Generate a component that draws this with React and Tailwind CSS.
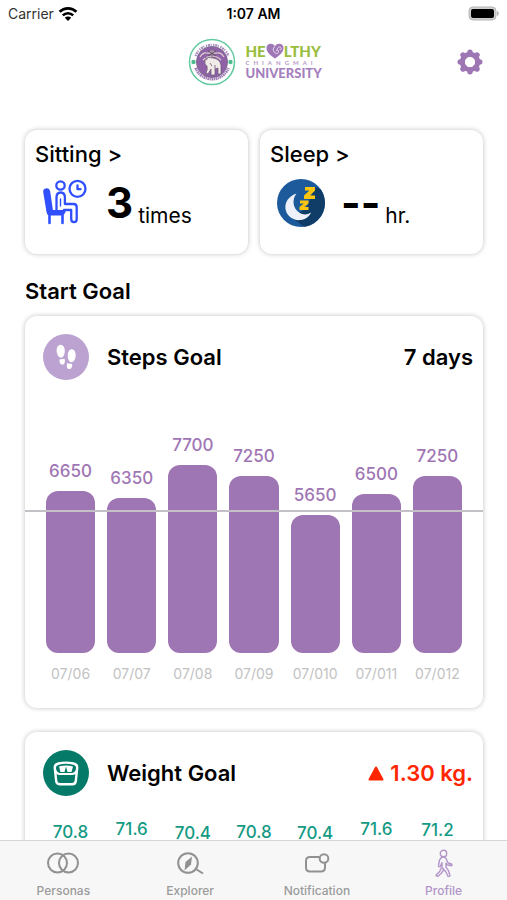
import React, { useState } from "react";

const steps = [
  { date: "07/06", value: 6650 },
  { date: "07/07", value: 6350 },
  { date: "07/08", value: 7700 },
  { date: "07/09", value: 7250 },
  { date: "07/010", value: 5650 },
  { date: "07/011", value: 6500 },
  { date: "07/012", value: 7250 },
];

const weights = [
  { date: "07/06", value: 70.8 },
  { date: "07/07", value: 71.6 },
  { date: "07/08", value: 70.4 },
  { date: "07/09", value: 70.8 },
  { date: "07/010", value: 70.4 },
  { date: "07/011", value: 71.6 },
  { date: "07/012", value: 71.2 },
];

const WifiIcon = () => (
  <svg width="20" height="16" viewBox="0 0 20 16" fill="none" stroke="#000" strokeWidth="2.6">
    <path d="M1.6 5.8a12 12 0 0 1 16.8 0" />
    <path d="M4.8 9.4a7.4 7.4 0 0 1 10.4 0" />
    <path d="M10 15l-3.2-3.3a4.6 4.6 0 0 1 6.4 0z" fill="#000" stroke="none" />
  </svg>
);

const BatteryIcon = () => (
  <svg width="31" height="16" viewBox="0 0 31 16">
    <rect x="1" y="1" width="27" height="13" rx="4" fill="#d0d0d0" stroke="#b5b5b5" />
    <rect x="3" y="3" width="23" height="9" rx="2" fill="#000" />
    <path d="M29 5v5c2.400-.8 2.400-4.200 0-5z" fill="#b5b5b5" />
  </svg>
);

const GearIcon = () => (
  <svg width="26" height="26" viewBox="0 0 26 26" fill="none" stroke="#9f76b4">
    <circle cx="13" cy="13" r="7.700" strokeWidth="5" />
    <path
      d="M13 3.200v2M13 20.800v2M3.200 13h2M20.800 13h2M6 6l1.500 1.500M18.500 18.500l1.500 1.500M6 20l1.500-1.500M18.500 7.500l1.500-1.500"
      strokeWidth="5.400"
      strokeLinecap="round"
    />
  </svg>
);

const SealLogo = () => (
  <svg width="48" height="48" viewBox="0 0 48 48" fill="none">
    <circle cx="24" cy="24" r="22.500" stroke="#63c9a0" strokeWidth="1.500" />
    <path d="M7.500 18a17.800 17.800 0 0 1 33 0" stroke="#a58cbc" strokeWidth="2.400" strokeDasharray="1.300 .8 2 .7 1 1.600" />
    <path d="M7.500 30a17.800 17.800 0 0 0 33 0" stroke="#a07db8" strokeWidth="2.800" strokeDasharray="1.800 .5 1.200 .6" />
    <circle cx="5.500" cy="24" r="2.200" fill="#4dbd8e" />
    <circle cx="42.500" cy="24" r="2.200" fill="#4dbd8e" />
    <circle cx="24" cy="24" r="15.600" fill="#8f62a8" stroke="#776684" strokeWidth=".8" />
    <path d="M12 19q3-5 7-4t5-3q1 4 5 3t7 4M15 22q4-4 9-4t9 4M24 12v8" stroke="#ddd0cf" strokeWidth="1.200" />
    <path d="M24 11v26M20 13l8 5M28 13l-8 5" stroke="#62515f" strokeWidth=".9" />
    <path
      d="M17 22q3-4 8-2 7 1 8 7v9h-3v-6l-3 1v6h-4v-6l-3 5-2-1q2-4 1-7-3-1-2-6z"
      fill="#f1ebe7"
      stroke="#6b5473"
      strokeWidth=".7"
    />
    <path d="M19 22l-2-4M22 25l2 3M27 27v4" stroke="#75647d" strokeWidth=".9" />
  </svg>
);

const HeartMark = () => (
  <svg className="shrink-0" width="18" height="16" viewBox="0 0 18 16" fill="none">
    <path d="M9 15.500C4 12 .5 9 .5 5 .5.500 6.500-.8 9 3.200c2.500-4 8.500-2.700 8.500 1.800 0 4-3.500 7-8.500 10.500z" fill="#a077b6" />
    <path d="M9 3.500c-3 2-1.500 5-.2 6.300 2 1.600 4.200 0 3.700-1.800-.5-1.500-2.300-1-2.300.2M11 6.500c1-3.500 4.300-3 4.300-1 0 1.500-1.300 1.600-1.800.7" stroke="#eadff0" strokeWidth="1" />
  </svg>
);

const SittingIcon = () => (
  <svg width="48" height="48" viewBox="0 0 48 48" fill="none" stroke="#304ffe" strokeWidth="2.300" strokeLinecap="round" strokeLinejoin="round">
    <path d="M3.500 9.500q3.800-1 4.600 2.500l2.800 19h13q-.3 4-3 5.500H8q-3 0-3.500-3.500L1.200 13q-.3-3 2.300-3.500z" fill="#304ffe" stroke="none" />
    <path d="M7.500 36v8M20.500 36v8" strokeWidth="2.600" />
    <circle cx="18.500" cy="6.500" r="4.200" />
    <path d="M14.500 31V18.500q0-5 4.200-5t4.200 5V25h8.600q3.200 0 3.200 3.200V40q0 3.200-2.700 3.200T29.200 40V31H22" />
    <path d="M18.500 20v7" strokeWidth="1.400" />
    <circle cx="35.500" cy="9.800" r="8" />
    <path d="M35.500 6.500v3.700h3" />
  </svg>
);

const SleepIcon = () => (
  <svg width="48" height="48" viewBox="0 0 48 48">
    <circle cx="24" cy="24" r="24" fill="#1c5a9b" />
    <path d="M38 8l5.800 2.600A24 24 0 0 1 27 47.800L14 38l15-8z" fill="#103d68" />
    <path d="M19.500 14.500C12 17 7.500 23 8.500 30c1 7 8 12 15 11 5-.6 9-3.500 10.500-7.500-3.500 2.500-8 2.500-11.500.3-6.500-4-8-13-3-19.300z" fill="#eef1f9" />
    <path d="M28 8h10v3.500l-5 5h5V20H27v-3.500l5.500-5H28zM23 21.500h8.500v3l-4 3.500h4v3h-9v-3l4.300-3.500H23z" fill="#fdc50d" />
  </svg>
);

const FootprintsIcon = () => (
  <svg width="46" height="46" viewBox="0 0 46 46">
    <circle cx="23" cy="23" r="23" fill="#bba2d0" />
    <g fill="#fff">
      <path d="M17.500 10.800c3.400 0 4.700 4 4.200 7.500-.3 2.200-1.200 5-3.300 5.500-2.500.3-3.800-2.300-4.400-4.500-1-4 .3-8.500 3.500-8.500z" />
      <path d="M16.500 25.500l5-.8c.8 2.700.5 5.600-1.900 5.900s-3.200-2.400-3.100-5.100z" />
      <path d="M28.800 15.300c3.300.1 4.500 4.500 3.600 8.500-.6 2.200-2 4.800-4.400 4.400-2.200-.5-3.100-3.200-3.200-5.400-.3-3.500.9-7.600 4-7.500z" />
      <path d="M24.200 29.200l5 .8c0 2.800-.8 5.400-3.100 5.100s-2.700-3.200-1.900-5.900z" />
    </g>
  </svg>
);

const ScaleIcon = () => (
  <svg width="46" height="46" viewBox="0 0 46 46" fill="none" stroke="#fff" strokeLinejoin="round">
    <circle cx="23" cy="23" r="23" fill="#067a68" stroke="none" />
    <path
      d="M15.500 13.500q7.500-1.800 15 0 4 1 3.700 4.500L32.800 31q-.3 3.200-3.500 3.200H16.700q-3.200 0-3.500-3.200L11.800 18q-.3-3.500 3.700-4.500z"
      strokeWidth="2.400"
    />
    <path d="M12.300 20.500q1.500 3.500 4.200 3.500h13q2.700 0 4.200-3.500" strokeWidth="2" />
    <path d="M16 16.500q7-2.200 14 0l-1.500 5.500h-11z" fill="#fff" stroke="none" />
    <path d="M21.500 22l1.500-5.500 1.500 5.500z" fill="#067a68" stroke="none" />
  </svg>
);

const PersonasIcon = () => (
  <svg width="34" height="26" viewBox="0 0 34 26" fill="none" stroke="#919191" strokeWidth="2">
    <circle cx="11.500" cy="13" r="9.500" />
    <circle cx="22.500" cy="13" r="9.500" />
  </svg>
);

const ExplorerIcon = () => (
  <svg width="28" height="26" viewBox="0 0 28 26" fill="none" stroke="#919191" strokeWidth="2">
    <circle cx="12" cy="13" r="9.800" />
    <path d="M19 18.500l8 5" />
    <path d="M16 6.500l-1 8-6.500 6 1-8.500z" fill="#919191" stroke="none" />
  </svg>
);

const NotificationIcon = () => (
  <svg width="26" height="26" viewBox="0 0 26 26" fill="none" stroke="#919191" strokeWidth="2">
    <path d="M15.500 7H6Q2 7 2 11v6.500q0 4 4 4h11q4 0 4-4V13" />
    <circle cx="20" cy="8.500" r="4.300" />
  </svg>
);

const ProfileIcon = () => (
  <svg width="20" height="28" viewBox="0 0 20 28" fill="none" stroke="#b295c9" strokeWidth="1.400" strokeLinejoin="round">
    <circle cx="9.500" cy="4.500" r="3.200" />
    <path d="M7.500 8.500q3-1 4.500 1l2 4.500 3.500 1q1 1 0 1.700l-4.500-1-1-1.500v4l2.500 3.500 1.500 5q-.7 1.500-2 .6l-2.200-4.600L8 18.500v-5L6.500 17q-.3 1.200-1.500.7-.8-.4-.5-1.200l1-5.500z" />
    <path d="M7.300 19l-1.800 3.800L2 26q.4 1.600 2 1.200l3.500-3.200 2-3" />
  </svg>
);

function StatCard({ title, icon, value, unit }) {
  return (
    <a
      href="#stat"
      className="flex h-[124px] flex-1 flex-col rounded-xl bg-white px-[10px] pt-[10px] shadow-[0_0_5px_rgba(0,0,0,0.25)]"
    >
      <span className="text-[22px] font-medium leading-7">{title} &gt;</span>
      <span className="mt-[10px] flex h-[50px] items-center pl-[7px]">
        {icon}
        <span className="ml-4 flex items-end gap-[5px]">
          <span className="text-[42px] font-bold leading-[50px]">{value}</span>
          <span className="text-[21px] leading-6">{unit}</span>
        </span>
      </span>
    </a>
  );
}

function BarChart({ data, scale, goal, barClass, textClass, format }) {
  return (
    <div>
      <div className="relative">
        <div className="grid h-[273px] grid-cols-7 items-end gap-3 px-[21px]">
          {data.map((d) => (
            <div key={d.date} className="flex flex-col items-center">
              <span className={`mb-2 text-[17px] font-medium leading-6 ${textClass}`}>{format(d.value)}</span>
              <div
                className={`w-full rounded-xl ${barClass}`}
                style={{ height: Math.round(d.value * scale) }}
              />
            </div>
          ))}
        </div>
        {/* goal line runs over the bars, edge to edge */}
        <div
          className="absolute inset-x-0 h-[2px] bg-[#c4c1c6]"
          style={{ bottom: Math.round(goal * scale) }}
        />
      </div>
      <div className="mt-[11px] grid grid-cols-7 gap-3 px-[21px]">
        {data.map((d) => (
          <span key={d.date} className="flex justify-center text-sm leading-5 text-[#c2c2c2]">
            {d.date}
          </span>
        ))}
      </div>
    </div>
  );
}

function GoalCard({ icon, title, right, children }) {
  return (
    <section className="rounded-xl bg-white pt-[18px] pb-6 shadow-[0_0_5px_rgba(0,0,0,0.25)]">
      <div className="flex items-center pr-[10px] pl-[18px]">
        {icon}
        <h3 className="ml-[18px] flex-1 text-[22px] font-semibold leading-7">{title}</h3>
        {right}
      </div>
      {children}
    </section>
  );
}

const tabs = [
  { name: "Personas", icon: <PersonasIcon /> },
  { name: "Explorer", icon: <ExplorerIcon /> },
  { name: "Notification", icon: <NotificationIcon /> },
  { name: "Profile", icon: <ProfileIcon /> },
];

function App() {
  const [tab, setTab] = useState("Profile");

  return (
    <div className="flex h-screen flex-col bg-white font-['Inter',sans-serif] text-black">
      <div className="grid h-7 grid-cols-3 items-center px-2 text-sm">
        <div className="flex items-center gap-1 text-[#333]">
          Carrier <WifiIcon />
        </div>
        <div className="text-center font-semibold">1:07 AM</div>
        <div className="flex justify-end">
          <BatteryIcon />
        </div>
      </div>

      <header className="grid h-[68px] grid-cols-[1fr_auto_1fr] items-center px-6">
        <span />
        <div className="flex items-center gap-[10px]">
          <SealLogo />
          <div className="flex w-[74px] flex-col font-['Lato',sans-serif]">
            <div className="flex h-[15px] items-end text-[15px] font-black leading-[15px] text-[#99bd3c]">
              HE
              <HeartMark />
              LTHY
            </div>
            <span className="text-[6px] font-bold leading-2 tracking-[4px] text-[#b49ac6]">CHIANGMAI</span>
            <span className="text-[13px] font-black leading-[13px] text-[#a57fbd]">UNIVERSITY</span>
          </div>
        </div>
        <button className="justify-self-end" aria-label="Settings">
          <GearIcon />
        </button>
      </header>

      <main className="min-h-0 flex-1 overflow-y-auto pt-[34px] pr-6 pb-6 pl-[25px] [scrollbar-width:none]">
        <div className="flex gap-3">
          <StatCard title="Sitting" icon={<SittingIcon />} value="3" unit="times" />
          <StatCard title="Sleep" icon={<SleepIcon />} value="--" unit="hr." />
        </div>

        <h2 className="mt-[23px] mb-[11px] text-[22px] font-semibold leading-7">Start Goal</h2>

        <div className="flex flex-col gap-6">
          <GoalCard
            icon={<FootprintsIcon />}
            title="Steps Goal"
            right={<span className="text-[22px] font-semibold leading-7">7 days</span>}
          >
            <BarChart
              data={steps}
              scale={1 / 41}
              goal={5780}
              barClass="bg-[#9f76b4]"
              textClass="text-[#9f76b4]"
              format={(v) => v}
            />
          </GoalCard>

          <GoalCard
            icon={<ScaleIcon />}
            title="Weight Goal"
            right={
              <span className="flex items-center gap-[6px] text-[22px] font-semibold leading-7 text-[#ff2600]">
                <svg width="16" height="15" viewBox="0 0 16 15">
                  <path d="M8 1.500L14.500 13.500H1.500z" fill="#ff2600" stroke="#ff2600" strokeWidth="2" strokeLinejoin="round" />
                </svg>
                1.30 kg.
              </span>
            }
          >
            <BarChart
              data={weights}
              scale={3.07}
              goal={60}
              barClass="bg-[#159a84]"
              textClass="text-[#159a84]"
              format={(v) => v.toFixed(1)}
            />
          </GoalCard>
        </div>
      </main>

      <nav className="grid h-[60px] grid-cols-4 border-t border-[#d5d5d5] bg-[#f7f7f7]">
        {tabs.map((t) => (
          <button
            key={t.name}
            onClick={() => setTab(t.name)}
            className={`flex flex-col items-center pt-2 text-xs font-medium ${
              tab === t.name ? "text-[#b295c9]" : "text-[#9b9b9b]"
            }`}
          >
            <span className="flex h-7 items-center">{t.icon}</span>
            <span className="mt-1 leading-5">{t.name}</span>
          </button>
        ))}
      </nav>
    </div>
  );
}

export default App;
